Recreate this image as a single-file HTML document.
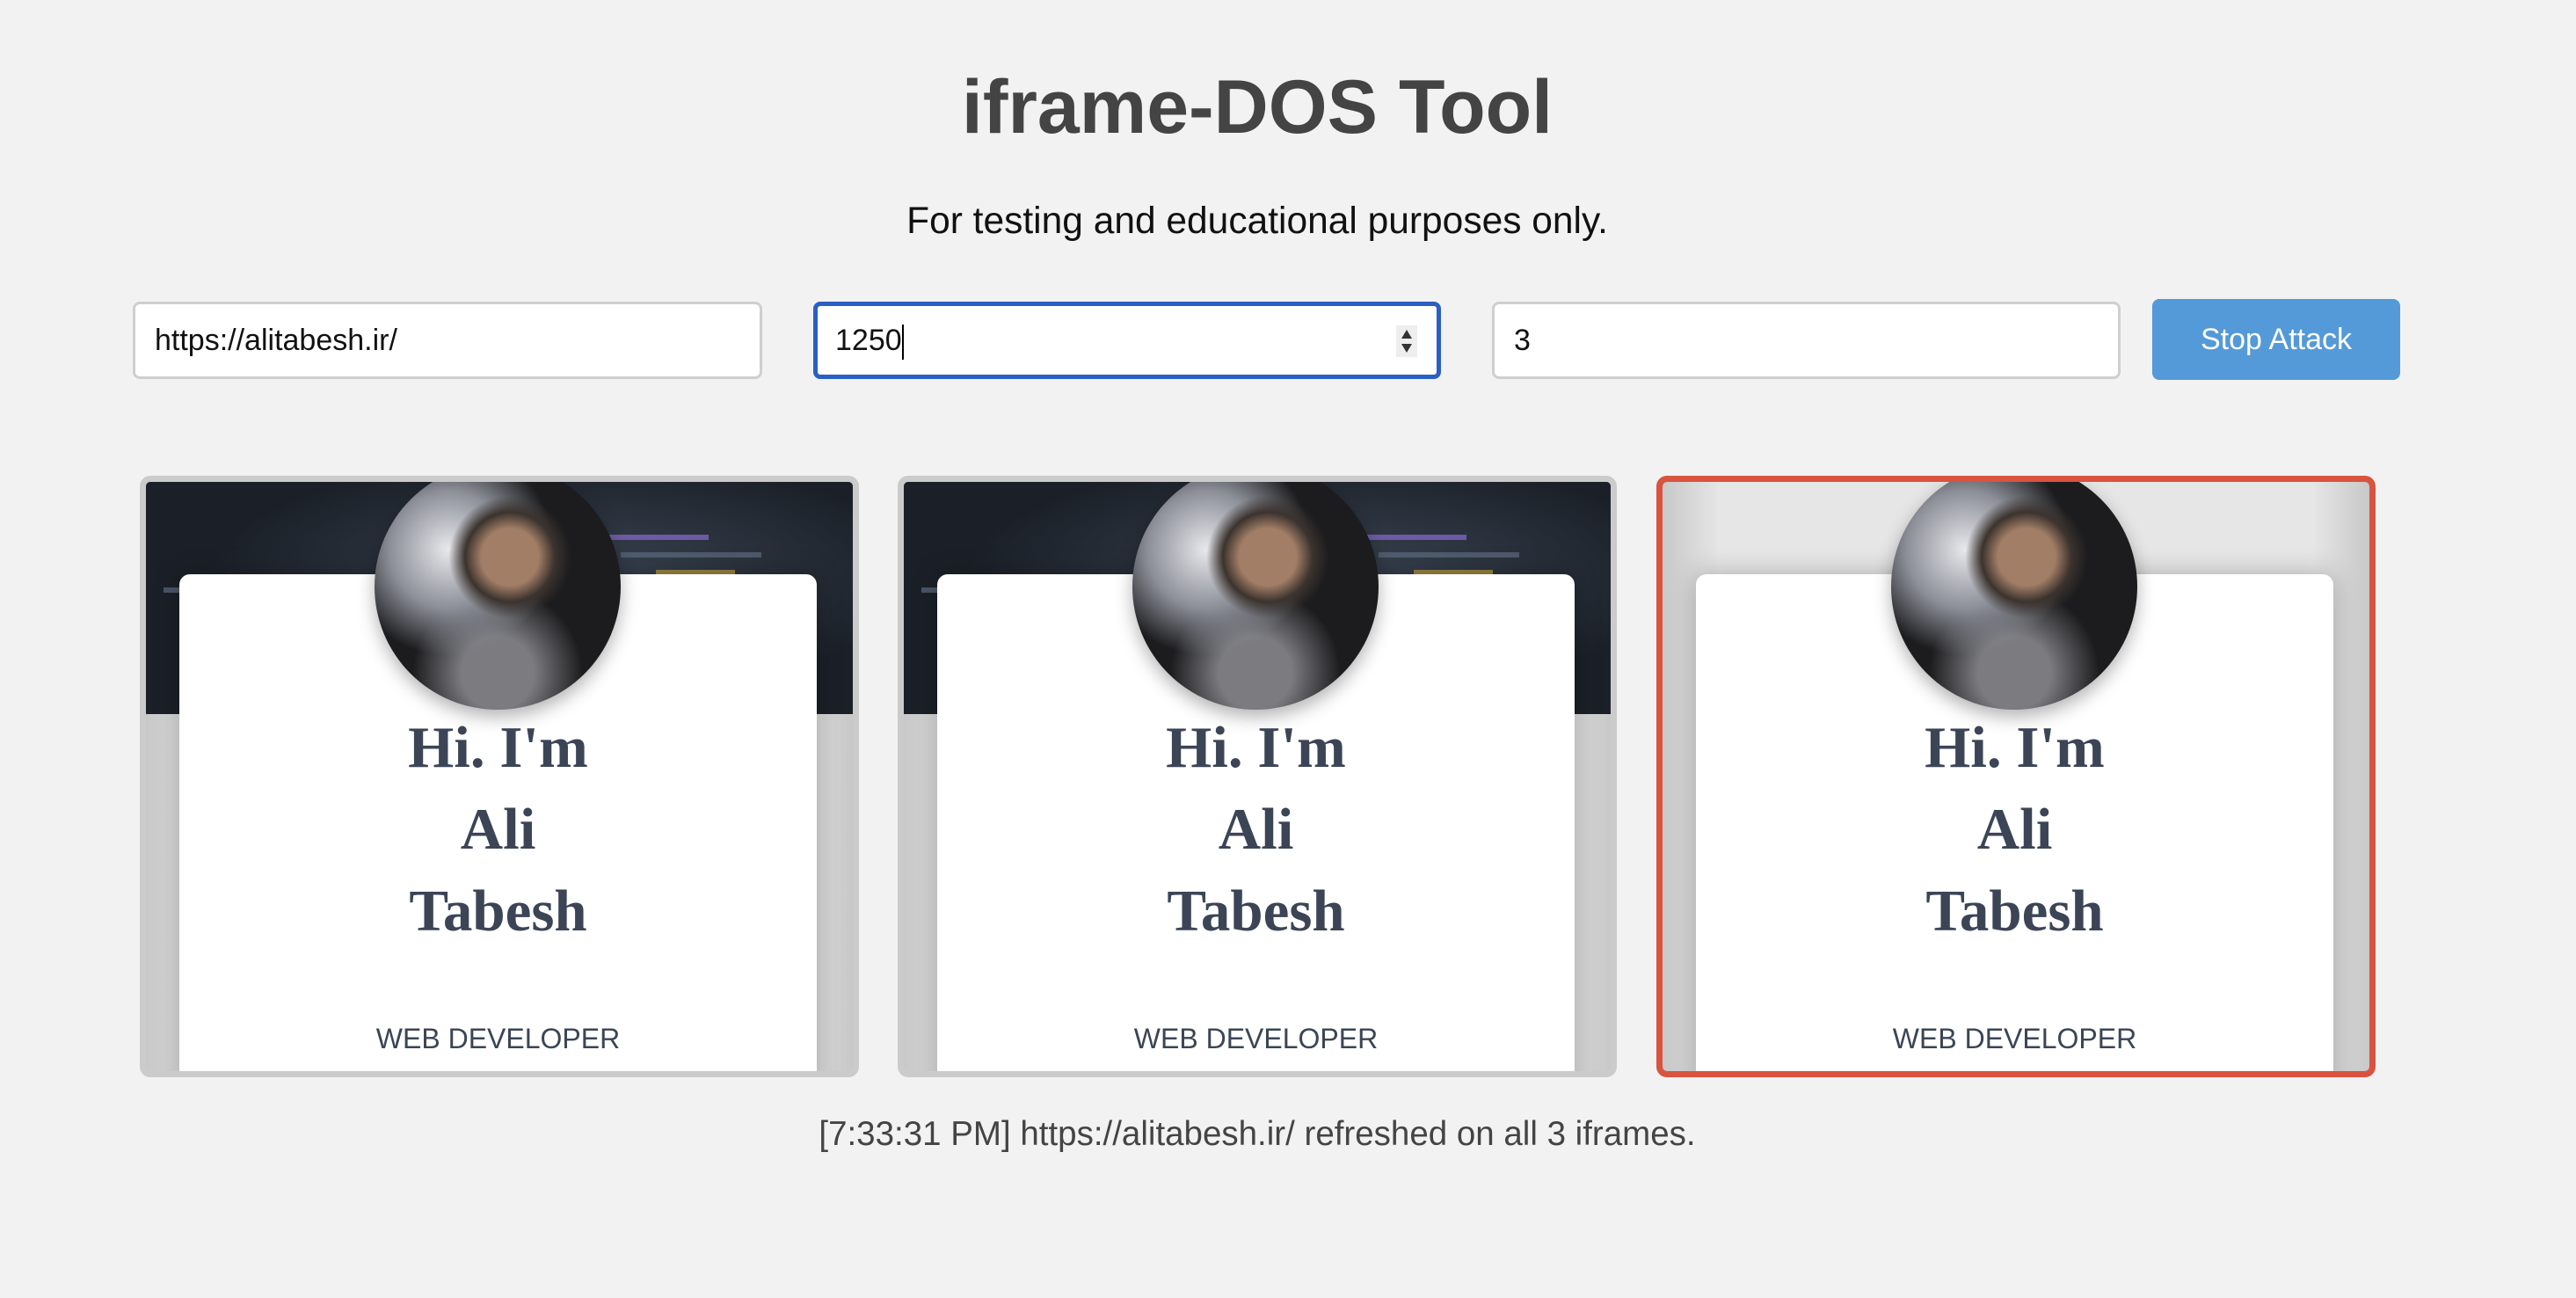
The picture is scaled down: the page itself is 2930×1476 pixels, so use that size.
<!DOCTYPE html>
<html><head><meta charset="utf-8"><style>
*{box-sizing:border-box;margin:0;padding:0}
body{width:2930px;height:1476px;background:#f2f2f2;font-family:"Liberation Sans",Arial,sans-serif;position:relative;overflow:hidden}
h1{position:absolute;top:73px;left:0;width:2860px;text-align:center;font-size:86px;font-weight:bold;color:#444}
.sub{position:absolute;top:228px;left:0;width:2860px;text-align:center;font-size:42.5px;color:#111}
.inp{position:absolute;top:343px;height:88px;background:#fff;border:3px solid #cfcfcf;border-radius:8px;font-size:34px;color:#111;padding-left:22px;line-height:82px}
.inp.f{border:5px solid #2a5fc4;padding-left:20px;line-height:78px}
.btn{position:absolute;left:2448px;top:340px;width:282px;height:92px;background:#5499d8;border-radius:8px;color:#fff;font-size:34px;text-align:center;line-height:92px}
.fr{position:absolute;top:541px;width:818px;height:684px;border:7px solid #cbcbcb;border-radius:12px;overflow:hidden;background:linear-gradient(90deg,#c8c8c8,#e6e6e6 8%,#e6e6e6 92%,#c8c8c8)}
.fr.red{border-color:#d9533f}
.bg{position:absolute;left:0;top:0;width:100%;height:264px;background:radial-gradient(ellipse at 60% 40%,#3a4452,#1b2028 60%),#1b2028}
.bg i{position:absolute;height:6px;background:#5d6b80;opacity:.7}
.card{position:absolute;left:38px;top:105px;width:725px;height:600px;background:#fff;border-radius:12px;box-shadow:0 0 30px rgba(0,0,0,.25)}
.av{position:absolute;left:260px;top:-21px;width:280px;height:280px;border-radius:50%;background:radial-gradient(circle at 55% 38%,#a27e66 0 14%,#3b332e 22%,transparent 30%),radial-gradient(circle at 30% 35%,#e8e8ec,#8c8f98 25%,transparent 45%),radial-gradient(circle at 50% 85%,#7b7b80 0 15%,#1c1c1e 35%),#2a2a2e;box-shadow:0 8px 20px rgba(0,0,0,.3)}
.nm{position:absolute;left:38px;top:256px;width:725px;text-align:center;font-family:"Liberation Serif",serif;font-weight:bold;font-size:67px;line-height:93px;color:#3b4556}
.wd{position:absolute;left:38px;top:615px;width:725px;text-align:center;font-size:32px;color:#3b4556}
.st{position:absolute;top:1268px;left:0;width:2860px;text-align:center;font-size:38.5px;color:#444}
</style></head><body>
<h1>iframe-DOS Tool</h1>
<div class="sub">For testing and educational purposes only.</div>
<div class="inp" style="left:151px;width:716px">https://alitabesh.ir/</div>
<div class="inp f" style="left:925px;width:714px">1250<span style="display:inline-block;width:2px;height:40px;background:#000;vertical-align:middle"></span>
<svg style="position:absolute;right:22px;top:22px" width="24" height="36"><rect width="24" height="36" fill="#eee"/><path d="M6 15 L12 5 L18 15Z M6 21 L12 31 L18 21Z" fill="#333"/></svg></div>
<div class="inp" style="left:1697px;width:715px">3</div>
<div class="btn">Stop Attack</div>

<div class="fr" style="left:159px"><div class="bg"><i style="left:520px;top:60px;width:120px;background:#8a6ad0"></i><i style="left:540px;top:80px;width:160px"></i><i style="left:20px;top:120px;width:140px"></i><i style="left:580px;top:100px;width:90px;background:#c0a040"></i></div><div class="card"></div><div class="av"></div><div class="nm">Hi. I'm<br>Ali<br>Tabesh</div><div class="wd">WEB DEVELOPER</div></div>
<div class="fr" style="left:1021px"><div class="bg"><i style="left:520px;top:60px;width:120px;background:#8a6ad0"></i><i style="left:540px;top:80px;width:160px"></i><i style="left:20px;top:120px;width:140px"></i><i style="left:580px;top:100px;width:90px;background:#c0a040"></i></div><div class="card"></div><div class="av"></div><div class="nm">Hi. I'm<br>Ali<br>Tabesh</div><div class="wd">WEB DEVELOPER</div></div>
<div class="fr red" style="left:1884px"><div class="card"></div><div class="av"></div><div class="nm">Hi. I'm<br>Ali<br>Tabesh</div><div class="wd">WEB DEVELOPER</div></div>

<div class="st">[7:33:31 PM] https://alitabesh.ir/ refreshed on all 3 iframes.</div>
</body></html>
